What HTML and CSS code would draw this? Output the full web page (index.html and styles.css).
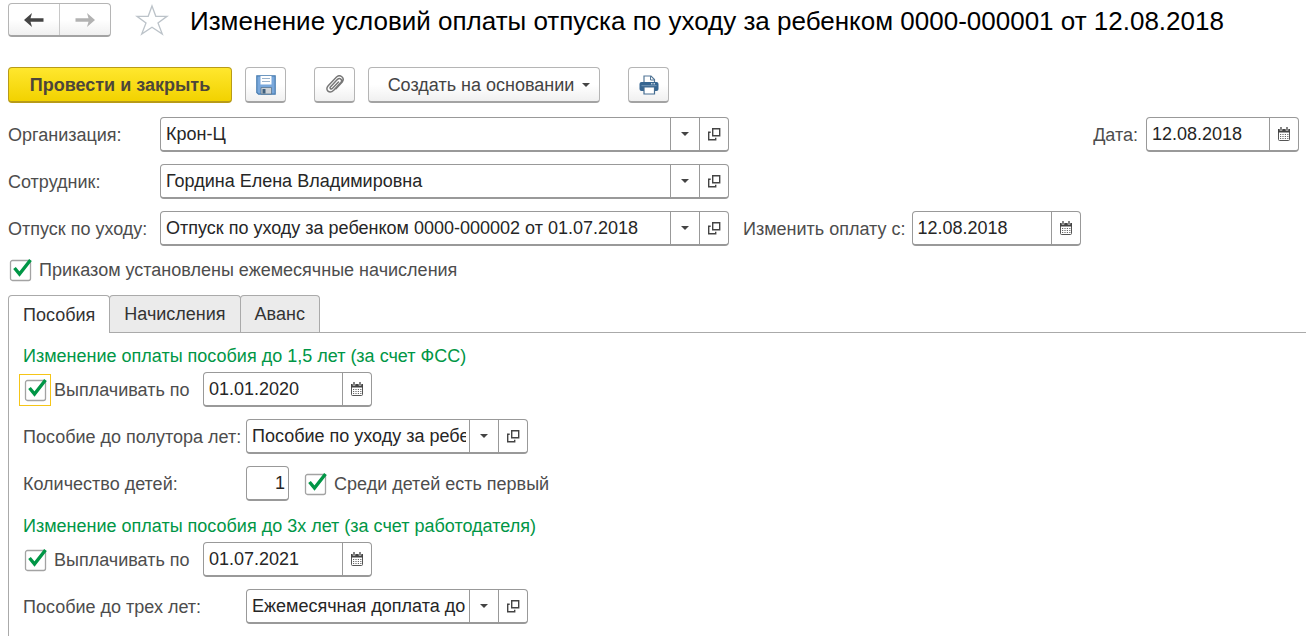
FILE: index.html
```html
<!DOCTYPE html>
<html lang="ru">
<head>
<meta charset="utf-8">
<meta name="viewport" content="width=device-width, initial-scale=1">
<title>Изменение условий оплаты отпуска по уходу за ребенком</title>
<link rel="stylesheet" href="styles.css">
</head>
<body>
<svg class="sprite" aria-hidden="true">
  <symbol id="open" viewBox="0 0 14 14"><path d="M5.700 1.700h7v7h-7z M3.700 5.200H1.700V12.700H8.700V10.700" fill="none" stroke="#444" stroke-width="1.400"/></symbol>
  <symbol id="caret" viewBox="0 0 8 4"><path d="M0 0h8L4 4z" fill="#444"/></symbol>
  <symbol id="calendar" viewBox="0 0 14 14"><rect x="1.500" y="2.500" width="11" height="11" rx="1" fill="#fff" stroke="#555"/><path d="M1 2h12v3.500H1z" fill="#444"/><path d="M4 0v3.500M10 0v3.500" stroke="#fff" stroke-width="2.600"/><path d="M4 0v3M10 0v3" stroke="#444" stroke-width="1.300"/><path d="M3 7.500h8.500M3 9.500h8.500M3 11.500h8.500" stroke="#666" stroke-width="1.100" stroke-dasharray="1.200 1.200"/></symbol>
</svg>

<header class="heading">
  <nav class="history" aria-label="История">
    <button type="button" class="history-btn" aria-label="Назад"><svg width="20" height="14" viewBox="0 0 20 14"><path d="M0 7 8 0 6.500 5.200H19.500V8.800H6.500L8 14z" fill="#444"/></svg></button>
    <button type="button" class="history-btn" aria-label="Вперед"><svg width="20" height="14" viewBox="0 0 20 14"><path d="M20 7 12 0l1.500 5.200H.5v3.600h13L12 14z" fill="#b2b2b2"/></svg></button>
  </nav>
  <button type="button" class="star" aria-label="В избранное"><svg width="34" height="32" viewBox="0 0 34 32"><path d="M17 2 20.800 12.300H32L23 18.900 27.300 30 17 23.200 6.700 30 11 18.900 2 12.300H13.200z" fill="#fff" stroke="#bcc3c9" stroke-width="1.300"/></svg></button>
  <h1 class="title">Изменение условий оплаты отпуска по уходу за ребенком 0000-000001 от 12.08.2018</h1>
</header>

<main class="form">
  <div class="toolbar">
    <button type="button" class="btn btn-primary">Провести и закрыть</button>
    <button type="button" class="btn btn-icon" aria-label="Записать"><svg width="20" height="20" viewBox="0 0 20 20"><path d="M.8.8h18.400v18.400H2.500L.8 17.500z" fill="#79a8dc" stroke="#4a7db0" stroke-width="1.200"/><path d="M4.500 1h11v8.500h-11z" fill="#fff"/><path d="M6 3.500h8M6 6.500h8" stroke="#9ab3cc"/><path d="M5 12.500h10.500v6.500H5z" fill="#ced2d6" stroke="#5b7690" stroke-width=".8"/><path d="M6.500 14h3v4.500h-3z" fill="#3e607f"/></svg></button>
    <button type="button" class="btn btn-icon btn-gap" aria-label="Присоединенные файлы"><svg width="20" height="20" viewBox="0 0 20 20"><path d="M13.500 7 7.500 13.300C6 14.800 4.300 13.200 5.600 11.700L12.300 4.600c2.500-2.500 5.700.2 3.500 2.900L8.700 15.200c-4.200 4.200-9.300-.2-5.500-4.400L11.500 2c3.700-3.200 8.700.8 5.700 5L11 13.800" fill="none" stroke="#777" stroke-width="1.500" stroke-linecap="round"/></svg></button>
    <button type="button" class="btn btn-menu" aria-haspopup="menu">Создать на основании<svg width="8" height="4"><use href="#caret"/></svg></button>
    <button type="button" class="btn btn-icon btn-gap" aria-label="Печать"><svg width="20" height="20" viewBox="0 0 20 20"><path d="M5 8V1h7l3.500 3.500V8" fill="#fff" stroke="#547797" stroke-width="1.200"/><path d="M11.500 1v4h4" fill="none" stroke="#547797"/><rect x=".5" y="7" width="19" height="9" rx="2" fill="#356591"/><path d="M12 8.800h1.500M14.500 8.800H16" stroke="#fff"/><path d="M2.500 10.700h15" stroke="#7397b8"/><path d="M5 12h10.500v7H5z" fill="#fff" stroke="#456d91" stroke-width="1.200"/></svg></button>
  </div>

  <div class="row">
    <label class="label label-main" for="org">Организация:</label>
    <div class="field field-main"><input id="org" type="text" value="Крон-Ц"><button type="button" aria-label="Выбрать"><svg width="8" height="4"><use href="#caret"/></svg></button><button type="button" aria-label="Открыть"><svg width="14" height="14"><use href="#open"/></svg></button></div>
    <div class="pair pair-end">
      <label class="label" for="date">Дата:</label>
      <div class="field field-day"><input id="date" type="text" value="12.08.2018"><button type="button" aria-label="Календарь"><svg width="14" height="14"><use href="#calendar"/></svg></button></div>
    </div>
  </div>
  <div class="row">
    <label class="label label-main" for="emp">Сотрудник:</label>
    <div class="field field-main"><input id="emp" type="text" value="Гордина Елена Владимировна"><button type="button" aria-label="Выбрать"><svg width="8" height="4"><use href="#caret"/></svg></button><button type="button" aria-label="Открыть"><svg width="14" height="14"><use href="#open"/></svg></button></div>
  </div>
  <div class="row">
    <label class="label label-main" for="leave">Отпуск по уходу:</label>
    <div class="field field-main"><input id="leave" type="text" value="Отпуск по уходу за ребенком 0000-000002 от 01.07.2018"><button type="button" aria-label="Выбрать"><svg width="8" height="4"><use href="#caret"/></svg></button><button type="button" aria-label="Открыть"><svg width="14" height="14"><use href="#open"/></svg></button></div>
    <div class="pair pair-next">
      <label class="label" for="from">Изменить оплату с:</label>
      <div class="field field-date"><input id="from" type="text" value="12.08.2018"><button type="button" aria-label="Календарь"><svg width="14" height="14"><use href="#calendar"/></svg></button></div>
    </div>
  </div>
  <label class="check"><input type="checkbox" checked>Приказом установлены ежемесячные начисления</label>
</main>

<div class="tabs" role="tablist">
  <button type="button" class="tab tab-active" role="tab" aria-selected="true" aria-controls="panel">Пособия</button>
  <button type="button" class="tab" role="tab" aria-selected="false">Начисления</button>
  <button type="button" class="tab" role="tab" aria-selected="false">Аванс</button>
</div>
<section class="panel" id="panel" role="tabpanel">
  <div class="group">
    <h2 class="group-title">Изменение оплаты пособия до 1,5 лет (за счет ФСС)</h2>
    <div class="row">
      <label class="check check-pay check-focus"><input type="checkbox" checked>Выплачивать по</label>
      <div class="field field-date"><input type="text" aria-label="Выплачивать по, дата до 1,5 лет" value="01.01.2020"><button type="button" aria-label="Календарь"><svg width="14" height="14"><use href="#calendar"/></svg></button></div>
    </div>
    <div class="row">
      <label class="label label-panel" for="b15">Пособие до полутора лет:</label>
      <div class="field field-benefit"><input id="b15" type="text" value="Пособие по уходу за ребенком до полутора лет"><button type="button" aria-label="Выбрать"><svg width="8" height="4"><use href="#caret"/></svg></button><button type="button" aria-label="Открыть"><svg width="14" height="14"><use href="#open"/></svg></button></div>
    </div>
    <div class="row">
      <label class="label label-panel" for="kids">Количество детей:</label>
      <div class="field field-count"><input id="kids" type="text" value="1"></div>
      <label class="check check-first"><input type="checkbox" checked>Среди детей есть первый</label>
    </div>
  </div>
  <div class="group">
    <h2 class="group-title">Изменение оплаты пособия до 3х лет (за счет работодателя)</h2>
    <div class="row">
      <label class="check check-pay"><input type="checkbox" checked>Выплачивать по</label>
      <div class="field field-date"><input type="text" aria-label="Выплачивать по, дата до 3х лет" value="01.07.2021"><button type="button" aria-label="Календарь"><svg width="14" height="14"><use href="#calendar"/></svg></button></div>
    </div>
    <div class="row">
      <label class="label label-panel" for="b3">Пособие до трех лет:</label>
      <div class="field field-benefit"><input id="b3" type="text" value="Ежемесячная доплата до трех лет"><button type="button" aria-label="Выбрать"><svg width="8" height="4"><use href="#caret"/></svg></button><button type="button" aria-label="Открыть"><svg width="14" height="14"><use href="#open"/></svg></button></div>
    </div>
  </div>
</section>
</body>
</html>
```
FILE: styles.css
```css
* { box-sizing: border-box; }

body {
  display: flex;
  flex-direction: column;
  min-height: 100vh;
  margin: 0;
  background: #fff;
  color: #4d4d4d;
  font: 18px/22px "Liberation Sans", Arial, sans-serif;
}

button, input {
  margin: 0;
  font: inherit;
  color: inherit;
}

svg { display: block; flex: none; }
.sprite { position: absolute; width: 0; height: 0; }

.heading {
  display: flex;
  align-items: center;
  padding: 3px 8px 0;
}

.history {
  display: flex;
  flex: none;
  width: 103px;
  height: 34px;
  border: 1px solid #b5b5b5;
  border-bottom: 2px solid #a3a3a3;
  border-radius: 4px;
  background: linear-gradient(#fff 50%, #f0f0f0);
}

.history-btn {
  display: flex;
  flex: 1;
  align-items: center;
  justify-content: center;
  padding: 0;
  border: 0;
  background: none;
}

.history-btn + .history-btn { border-left: 1px solid #c8c8c8; }

.star {
  margin: 0 21px 0 24px;
  padding: 0;
  border: 0;
  background: none;
}

.title {
  margin: 0;
  padding-top: 2px;
  color: #000;
  font-size: 26px;
  font-weight: 400;
  line-height: 32px;
  white-space: nowrap;
}

.form {
  display: flex;
  flex-direction: column;
  gap: 12px;
  padding: 30px 7px 13px 8px;
}

.toolbar { display: flex; gap: 13px; margin-bottom: 2px; }

.btn {
  display: flex;
  align-items: center;
  justify-content: center;
  height: 36px;
  padding: 0 8px 0 18px;
  border: 1px solid #b5b5b5;
  border-bottom: 2px solid #a3a3a3;
  border-radius: 4px;
  background: linear-gradient(#fff 50%, #f0f0f0);
  color: #444;
  white-space: nowrap;
}

.btn-primary {
  width: 224px;
  padding: 0;
  border-color: #b89b18;
  background: linear-gradient(#ffe72e, #f2d200);
  color: #4d4639;
  font-weight: 700;
}

.btn-icon { width: 41px; padding: 0; }
.btn-gap { margin-left: 15px; }
.btn-menu { width: 232px; gap: 8px; }

.row { display: flex; align-items: center; }
.label { white-space: nowrap; }
.label-main { flex: none; width: 152px; }
.label-panel { flex: none; width: 223px; }

.field {
  display: flex;
  flex: none;
  height: 35px;
  border: 1px solid #999;
  border-bottom-width: 2px;
  border-radius: 4px;
  background: #fff;
  color: #262626;
}

.field input {
  flex: 1;
  min-width: 0;
  padding: 0 3px 0 5px;
  border: 0;
  outline: 0;
  background: none;
}

.field button {
  display: flex;
  flex: none;
  align-items: center;
  justify-content: center;
  width: 29px;
  padding: 0;
  border: 0;
  border-left: 1px solid #999;
  background: none;
}

.field-main { width: 569px; }
.field-date { width: 169px; }
.field-day { width: 153px; }
.field-benefit { width: 282px; }
.field-count { width: 43px; }
.field-count input { text-align: right; }

.pair { display: flex; align-items: center; gap: 8px; }
.pair-end { margin-left: auto; }
.pair-next { gap: 6px; margin-left: 14px; }

.check {
  display: flex;
  align-items: center;
  gap: 7px;
  white-space: nowrap;
}

.check input {
  flex: none;
  width: 24px;
  height: 24px;
  appearance: none;
  background: url("data:image/svg+xml,%3Csvg xmlns='http://www.w3.org/2000/svg' viewBox='0 0 24 24'%3E%3Crect x='2.500' y='2.500' width='20' height='20' rx='2' fill='%23fff' stroke='%23a3a3a3' stroke-width='1.300'/%3E%3C/svg%3E") center / 24px 24px no-repeat;
}

.check input:checked {
  background-image: url("data:image/svg+xml,%3Csvg xmlns='http://www.w3.org/2000/svg' viewBox='0 0 24 24'%3E%3Crect x='2.500' y='2.500' width='20' height='20' rx='2' fill='%23fff' stroke='%23a3a3a3' stroke-width='1.300'/%3E%3Cpath d='M6.500 10 11.500 16 22.500 2' fill='none' stroke='%23009646' stroke-width='3.400'/%3E%3C/svg%3E");
}

.check-pay { width: 180px; }
.check-focus input { outline: 1px solid #f5c518; outline-offset: 3px; }
.check-first { margin-left: 14px; }

.tabs { display: flex; padding-left: 8px; }

.tab {
  height: 37px;
  margin-right: -1px;
  padding: 0 14px;
  border: 1px solid #aaa;
  border-bottom: 0;
  border-radius: 4px 4px 0 0;
  background: #ebebeb;
  color: #333;
}

.tab-active {
  z-index: 1;
  height: 38px;
  margin-bottom: -1px;
  background: #fff;
}

.panel {
  display: flex;
  flex: 1;
  flex-direction: column;
  gap: 14px;
  margin-left: 8px;
  padding: 12px 0 12px 14px;
  border-top: 1px solid #aaa;
  border-left: 1px solid #aaa;
}

.group {
  display: flex;
  flex-direction: column;
  gap: 12px;
}

.group-title {
  margin: 0 0 -7px;
  color: #009646;
  font-size: 18px;
  font-weight: 400;
  line-height: 22px;
}
```
